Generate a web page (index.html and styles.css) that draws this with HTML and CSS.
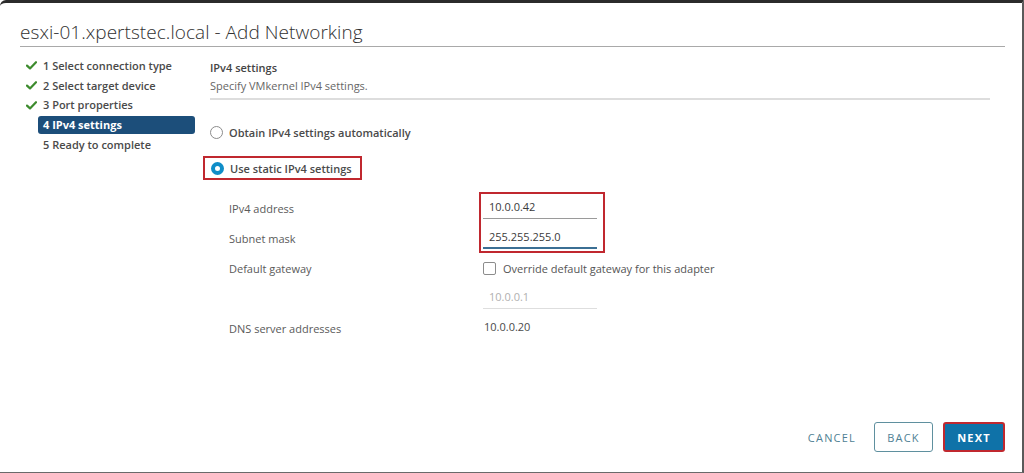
FILE: index.html
```html
<!DOCTYPE html>
<html>
<head>
<meta charset="utf-8">
<link rel="stylesheet" href="styles.css">
</head>
<body>
<div class="frame">
  <header class="head">
    <h1 class="title">esxi-01.xpertstec.local - Add Networking</h1>
  </header>
  <div class="wizard">
    <nav class="steps">
      <div class="step done"><span class="mark"><svg width="11" height="9" viewBox="0 0 11 9"><path d="M1 4.6 L4 7.4 L10 1.2" fill="none" stroke="#3d8b2e" stroke-width="2.2" stroke-linecap="round" stroke-linejoin="round"/></svg></span><span class="label">1 Select connection type</span></div>
      <div class="step done"><span class="mark"><svg width="11" height="9" viewBox="0 0 11 9"><path d="M1 4.6 L4 7.4 L10 1.2" fill="none" stroke="#3d8b2e" stroke-width="2.2" stroke-linecap="round" stroke-linejoin="round"/></svg></span><span class="label">2 Select target device</span></div>
      <div class="step done"><span class="mark"><svg width="11" height="9" viewBox="0 0 11 9"><path d="M1 4.6 L4 7.4 L10 1.2" fill="none" stroke="#3d8b2e" stroke-width="2.2" stroke-linecap="round" stroke-linejoin="round"/></svg></span><span class="label">3 Port properties</span></div>
      <div class="step active"><span class="mark"></span><span class="label">4 IPv4 settings</span></div>
      <div class="step"><span class="mark"></span><span class="label">5 Ready to complete</span></div>
    </nav>
    <main class="content">
      <div class="section-head">
        <div class="sec-title">IPv4 settings</div>
        <div class="sec-desc">Specify VMkernel IPv4 settings.</div>
      </div>
      <div class="radio-row first"><span class="radio"></span><span class="rlabel">Obtain IPv4 settings automatically</span></div>
      <div class="radio-row second"><div class="hl-box"><span class="radio on"></span><span class="rlabel">Use static IPv4 settings</span></div></div>
      <div class="form">
        <div class="inputs-box">
          <div class="row"><div class="flabel">IPv4 address</div><div class="fval"><div class="input">10.0.0.42</div></div></div>
          <div class="row"><div class="flabel">Subnet mask</div><div class="fval"><div class="input focus">255.255.255.0</div></div></div>
        </div>
        <div class="row"><div class="flabel">Default gateway</div><div class="fval"><span class="checkbox"></span><span class="cblabel">Override default gateway for this adapter</span></div></div>
        <div class="row"><div class="flabel"></div><div class="fval"><div class="input disabled">10.0.0.1</div></div></div>
        <div class="row"><div class="flabel">DNS server addresses</div><div class="fval plain">10.0.0.20</div></div>
      </div>
    </main>
  </div>
  <footer class="foot">
    <button class="btn link">CANCEL</button>
    <button class="btn outline">BACK</button>
    <button class="btn primary">NEXT</button>
  </footer>
</div>
</body>
</html>
```

FILE: styles.css
```css
* { box-sizing: border-box; }
html, body { margin: 0; padding: 0; background: #ffffff; }
body { font-family: "Open Sans", "Liberation Sans", sans-serif; color: #565656; }

.frame {
  width: 1024px;
  height: 473px;
  border-top: 3px solid #2b2b2b;
  border-right: 2px solid #5a5a5a;
  border-bottom: 1px solid #6a6a6a;
  border-top-left-radius: 6px;
  display: flex;
  flex-direction: column;
  position: relative;
}

.head { padding: 0 17px 0 20px; }
.title {
  margin: 0;
  height: 44px;
  padding-top: 17px;
  font-size: 19px;
  line-height: 24px;
  font-weight: 300;
  color: #313131;
  letter-spacing: 0.05px;
  border-bottom: 1px solid #a9a9a9;
}

.wizard { display: flex; flex: 1; padding-top: 9px; }

.steps { width: 195px; padding-left: 20px; }
.step { display: flex; align-items: center; height: 19.75px; }
.mark { width: 18px; display: flex; justify-content: flex-start; padding-left: 6px; }
.label {
  flex: 1;
  height: 18px;
  line-height: 18px;
  padding-left: 5px;
  font-size: 11px;
  font-weight: 600;
  color: #4a4a4a;
  border-radius: 3px;
  white-space: nowrap;
}
.step.active .label { background: #1c4e7a; color: #ffffff; font-weight: 700; }

.content { flex: 1; padding-left: 15px; padding-right: 32px; }
.section-head { border-bottom: 2px solid #dddddd; padding-top: 3px; height: 44px; }
.sec-title { font-size: 11px; font-weight: 600; color: #444; line-height: 17px; }
.sec-desc { font-size: 11px; color: #666; line-height: 19px; }

.radio-row { display: flex; align-items: center; }
.radio-row.first { margin-top: 22px; height: 20px; }
.radio-row.second { margin-top: 14px; }
.hl-box {
  display: flex;
  align-items: center;
  margin-left: -7px;
  height: 24px;
  width: 159px;
  padding-left: 6px;
  border: 2px solid #c0282f;
}
.radio {
  width: 13px; height: 13px;
  border: 1px solid #8c8c8c;
  border-radius: 50%;
  background: #fff;
  display: inline-block;
}
.radio.on { border: 4px solid #0f8dc8; background: #fff; width: 13px; height: 13px; }
.rlabel { margin-left: 6px; font-size: 11px; font-weight: 600; color: #4a4a4a; }

.form { margin-top: 13px; position: relative; }
.row { display: flex; align-items: center; height: 30px; }
.flabel { width: 273px; padding-left: 19px; font-size: 11px; color: #5a5a5a; }
.fval { display: flex; align-items: center; font-size: 11px; color: #4a4a4a; }
.fval.plain { padding-left: 1px; margin-top: -4px; }

.inputs-box { position: relative; }
.inputs-box::after {
  content: "";
  position: absolute;
  left: 269px; top: -1px;
  width: 122px; height: 57px;
  border: 2px solid #c0282f;
  pointer-events: none;
}
.input {
  width: 114px;
  height: 22px;
  line-height: 20px;
  padding-left: 6px;
  border-bottom: 1px solid #9a9a9a;
  font-size: 11px;
  color: #3a3a3a;
}
.input.focus { border-bottom: 2px solid #3b6f94; }
.input.disabled { color: #b0b0b0; border-bottom: 1px solid #dedede; }

.checkbox {
  width: 13px; height: 13px;
  border: 1px solid #8c8c8c;
  border-radius: 2px;
  display: inline-block;
}
.cblabel { margin-left: 7px; color: #555; }

.foot {
  display: flex;
  justify-content: flex-end;
  align-items: center;
  gap: 10px;
  padding: 0 17px 20px 0;
}
.btn {
  font-family: "Open Sans", "Liberation Sans", sans-serif;
  font-size: 11px;
  letter-spacing: 1.2px;
  height: 30px;
  border-radius: 3px;
  background: #fff;
  cursor: pointer;
}
.btn.link { border: none; color: #4f7f94; padding: 0 9px 0 11px; margin-right: -1px; }
.btn.outline { border: 1px solid #5f909f; color: #4f7f94; width: 59px; }
.btn.primary {
  background: #0f72a8;
  color: #fff;
  font-weight: 700;
  border: 2px solid #c0282f;
  width: 62px;
}
```
